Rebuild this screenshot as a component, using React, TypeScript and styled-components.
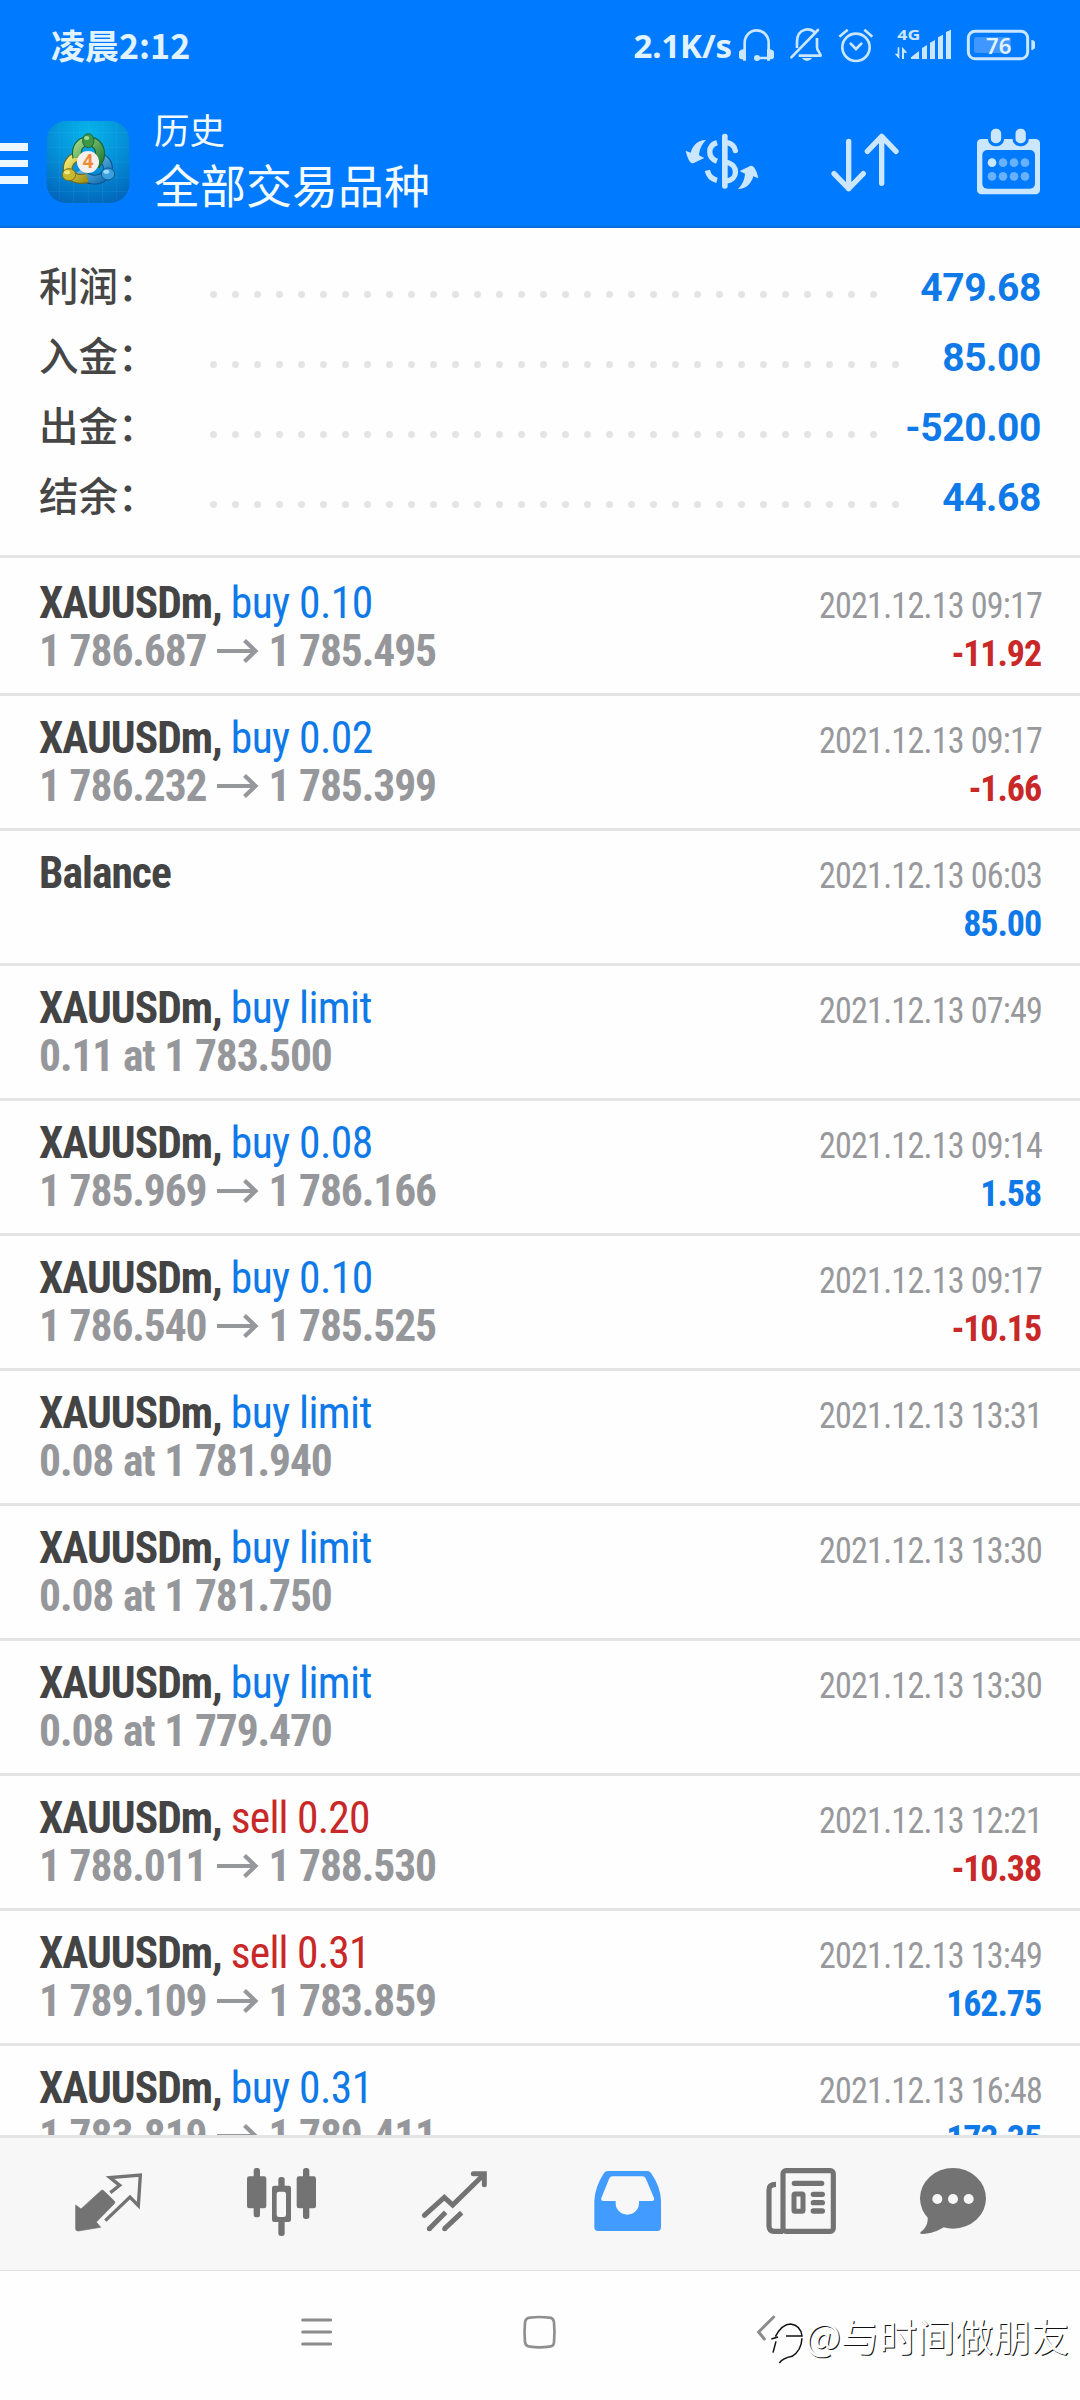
import React from "react";
import styled, { createGlobalStyle } from "styled-components";

const BLUE = "#007aff";
const VALUE_BLUE = "#0f79e8";
const RED = "#c82828";
const ICE = "#cbe6ff";
const TAB = "#737373";
const LINE = "#e4e4e4";

const Global = createGlobalStyle`
  * { box-sizing: border-box; }
  body { margin: 0; background: #fefefe; }
`;

const Screen = styled.div`
  position: relative;
  width: 1080px;
  height: 2400px;
  display: flex;
  flex-direction: column;
  overflow: hidden;
  background: #fefefe;
  font-family: Roboto, "Noto Sans CJK SC", sans-serif;
`;

const Header = styled.header`
  height: 228px;
  flex: none;
  background: ${BLUE};
  border-bottom: 2px solid #0c6cdb;
`;

const StatusBar = styled.div`
  height: 120px;
  padding: 28px 44px 0 51px;
  display: flex;
  align-items: flex-start;
  color: #e0f3ff;
`;

const Clock = styled.span`
  font: 700 34px/34px "Noto Sans CJK SC", sans-serif;
`;

const StatusRight = styled.div`
  margin-left: auto;
  display: flex;
  gap: 14px;
  height: 35px;
`;

const Speed = styled.span`
  font: 700 33px/35px "Noto Sans", sans-serif;
  letter-spacing: -0.1px;
  margin-right: -7px;
`;

const TitleBar = styled.div`
  display: flex;
  height: 84px;
  padding-right: 38px;
`;

const Burger = styled.div`
  width: 28px;
  margin-right: 18px;
  padding-top: 23px;
  display: flex;
  flex-direction: column;
  gap: 9px;
`;

const BurgerLine = styled.i`
  height: 7.7px;
  background: #ecf8ff;
`;

const Titles = styled.div`
  margin-left: 24px;
  margin-top: -10px;
  flex: 1;
  color: #f3fbff;
  font-family: "Noto Sans CJK SC", sans-serif;
  font-weight: 400;
`;

const Section = styled.div`
  font-size: 35.5px;
  line-height: 38px;
`;

const Symbols = styled.div`
  font-size: 46px;
  line-height: 71px;
`;

const Actions = styled.div`
  display: flex;
  padding-top: 7px;
  & > svg:nth-child(2) { margin: 0 75px 0 70px; }
`;

const Summary = styled.section`
  height: 330px;
  flex: none;
  padding: 23px 39px 0;
  border-bottom: 3px solid ${LINE};
`;

const SummaryRow = styled.div`
  height: 70px;
  display: flex;
  align-items: center;
`;

const Label = styled.span`
  width: 171px;
  font: 500 39.5px/70px "Noto Sans CJK SC", sans-serif;
  color: #464646;
  margin-top: -5px;
`;

const Dots = styled.span`
  flex: 1;
  display: flex;
  gap: 15px;
  padding-top: 17px;
`;

const Dot = styled.i`
  width: 7px;
  height: 7px;
  border-radius: 50%;
  background: #e4e4e4;
`;

const Total = styled.span`
  font: 700 39px/70px Roboto, sans-serif;
  letter-spacing: -0.4px;
  padding-top: 3px;
  color: ${VALUE_BLUE};
`;

const List = styled.section`
  flex: 1;
  min-height: 0;
  overflow: hidden;
  padding-top: 3px;
`;

const Row = styled.article`
  height: 135px;
  padding: 19px 38px 0 39px;
  display: flex;
  justify-content: space-between;
  border-bottom: 3px solid ${LINE};
  font-family: "Roboto Condensed", Roboto, sans-serif;
  font-stretch: 75%;
  white-space: nowrap;
`;

const Left = styled.div`
  font-size: 43.5px;
  line-height: 48px;
`;

const Right = styled.div`
  text-align: right;
  font-size: 36px;
  line-height: 48px;
  padding-top: 2px;
`;

const Name = styled.div`
  height: 48px;
  color: #444;
  font-weight: 700;
  letter-spacing: -0.98px;
`;

const Side = styled.span<{ $sell?: boolean }>`
  font-weight: 400;
  letter-spacing: ${(p) => (p.$sell ? -0.8 : -0.58)}px;
  color: ${(p) => (p.$sell ? RED : VALUE_BLUE)};
`;

const Detail = styled.div`
  color: #96979b;
  font-weight: 700;
  height: 48px;
  letter-spacing: -1.1px;
  word-spacing: 0.8px;
`;

const Arrow = styled.svg`
  width: 42px;
  height: 24px;
  margin: 0 9px 3px 11px;
`;

const Time = styled.div`
  color: #98999c;
  letter-spacing: -0.8px;
  transform: scaleX(0.945);
  transform-origin: right;
`;

const Profit = styled.div<{ $neg: boolean }>`
  font-weight: 700;
  letter-spacing: -1.1px;
  padding-right: 1px;
  color: ${(p) => (p.$neg ? RED : VALUE_BLUE)};
`;

const TabBar = styled.nav`
  height: 136px;
  flex: none;
  padding-left: 22px;
  display: flex;
  background: #f7f7f7;
  border-top: 3px solid ${LINE};
  border-bottom: 1px solid #e2e2e2;
`;

const Tab = styled.div<{ $w?: number }>`
  width: ${(p) => p.$w ?? 173}px;
  padding-top: 28px;
  display: flex;
  justify-content: center;
`;

const NavBar = styled.div`
  height: 129px;
  flex: none;
  padding: 42px 0 0 301px;
  display: flex;
  gap: 189px;
  & > svg:last-child { margin-left: 10px; }
`;

const Watermark = styled.div`
  position: absolute;
  left: 770px;
  top: 2309px;
  display: flex;
  color: #fff;
  font: 400 38px/52px "Noto Sans CJK SC", sans-serif;
  text-shadow: 1px 1px 0.5px #111;
`;

type IconProps = { box: [number, number, number, number]; children: React.ReactNode };

const Glyph = styled.svg`
  flex: none;
  overflow: visible;
`;

/* Icon paths are drawn on a grid three times finer than the screen. */
const Icon = ({ box, children }: IconProps) => (
  <Glyph width={box[2] / 3} height={box[3] / 3} viewBox={box.join(" ")} fill="none">
    {children}
  </Glyph>
);

const StatusIcons = () => (
  <>
    <Icon box={[357, 24, 108, 105]}>
      <path d="M374 118V68a36 37 0 0 1 72 0v46H412" stroke={ICE} strokeWidth="8" />
      <path d="M378 88v34h-9v-4q-12 0-12-8v-12q0-8 12-10zM441 88v34h9v-4q12 0 12-8v-12q0-8-12-10z" fill={ICE} />
      <circle cx="411" cy="114" r="9" fill={ICE} />
    </Icon>
    <Icon box={[507, 24, 102, 105]}>
      <path d="M531 84V66c0-46 46-43 53-28M591 54v27c0 14 10 15 11 26H536" stroke={ICE} strokeWidth="8" strokeLinejoin="round" />
      <path d="M514 112L594 30" stroke={ICE} strokeWidth="8" strokeLinecap="round" />
      <path d="M545 114h32q-16 18-32 0z" fill={ICE} />
    </Icon>
    <Icon box={[651, 24, 111, 105]}>
      <circle cx="708" cy="82" r="41" stroke={ICE} strokeWidth="8" />
      <path d="M692 71l16 16 16-16" stroke={ICE} strokeWidth="8" strokeLinecap="round" />
      <path d="M658 50l25-21M733 29l24 21" stroke={ICE} strokeWidth="8" />
    </Icon>
    <Icon box={[804, 24, 192, 105]}>
      <text x="832" y="59" fontFamily="Noto Sans" fontWeight="700" fontSize="45" textLength="69" lengthAdjust="spacingAndGlyphs" fill={ICE}>4G</text>
      <path d="M873 117v-5l24-19v24zM906 117V84l15-9v42zM930 117V68l15-8v57zM954 117V52l15-8v73zM978 117V36l15-7v88z" fill={ICE} />
      <path d="M838 82v35l-14-16h9V82zM846 117V80l16 18h-10v19z" fill={ICE} />
    </Icon>
    <Icon box={[1038, 24, 210, 105]}>
      <rect x="1045" y="34" width="178" height="82" rx="20" stroke={ICE} strokeWidth="9" />
      <rect x="1062" y="51" width="110" height="48" rx="8" fill="#4097ff" />
      <path d="M1234 60q11 1 11 8v14q0 7-11 8z" fill={ICE} />
      <text x="1098" y="101" fontFamily="Noto Sans" fontWeight="600" fontSize="67" textLength="76" lengthAdjust="spacingAndGlyphs" fill="#e0f3ff">76</text>
    </Icon>
  </>
);

const Logo = () => (
  <Icon box={[138, 300, 252, 252]}>
    <defs>
      <radialGradient id="bg" cx="0.5" cy="0.15" r="0.9">
        <stop offset="0" stopColor="#06b5ea" />
        <stop offset="0.5" stopColor="#0590d8" />
        <stop offset="1" stopColor="#0265ba" />
      </radialGradient>
      <linearGradient id="gr" x2="1" y2="1"><stop stopColor="#9fd684" /><stop offset="1" stopColor="#207a34" /></linearGradient>
      <linearGradient id="ye" x2="1" y2="1"><stop stopColor="#f4ec78" /><stop offset="1" stopColor="#a29216" /></linearGradient>
      <linearGradient id="bl" x2="1" y2="1"><stop stopColor="#7fd0f8" /><stop offset="1" stopColor="#136db0" /></linearGradient>
    </defs>
    <rect x="140" y="303" width="248" height="246" rx="58" fill="url(#bg)" />
    <path d="M178 310v232M221 303v246M265 303v246M308 303v246M350 310v232M140 338h248M140 382h248M140 426h248M140 472h248M140 514h248" stroke="#5fd0f5" strokeOpacity="0.16" strokeWidth="2" />
    <g strokeWidth="30">
      <path d="M238 452c22 34 62 34 80 10c12-18 4-38-12-46" stroke="#0b568f" />
      <path d="M238 452c22 34 62 34 80 10c12-18 4-38-12-46" stroke="url(#bl)" strokeWidth="23" />
      <path d="M262 474c-26 8-52-2-58-22c-4-20 10-40 32-42" stroke="#6d6a20" />
      <path d="M262 474c-26 8-52-2-58-22c-4-20 10-40 32-42" stroke="url(#ye)" strokeWidth="23" />
      <path d="M232 412C226 385 240 364 265 364s40 22 34 50l-14 24" stroke="#17663a" />
      <path d="M232 412C226 385 240 364 265 364s40 22 34 50l-14 24" stroke="url(#gr)" strokeWidth="23" />
    </g>
    <ellipse cx="265" cy="362" rx="17" ry="21" fill="#3d9845" stroke="#1b653b" strokeWidth="3" />
    <ellipse cx="207" cy="464" rx="20" ry="18" fill="#c9b92c" stroke="#77701e" strokeWidth="3" />
    <ellipse cx="324" cy="462" rx="20" ry="18" fill="#3d9ede" stroke="#0b568f" strokeWidth="3" />
    <ellipse cx="260" cy="354" rx="8" ry="6" fill="#a5dc9b" />
    <ellipse cx="201" cy="457" rx="9" ry="6" fill="#f1e882" />
    <ellipse cx="319" cy="455" rx="9" ry="6" fill="#9bdaf8" />
    <circle cx="264" cy="426" r="33" fill="#f3efec" />
    <text x="264" y="445" textAnchor="middle" fontFamily="Noto Sans" fontWeight="700" fontSize="56" fill="#f08a35">4</text>
  </Icon>
);

const swoosh = "M258 357C236 356 218 372 212 395L197 389Q202 412 210 422Q216 430 226 424L253 411L237 403C238 386 246 368 258 357Z";

const HeaderIcons = () => (
  <Actions>
    <Icon box={[192, 318, 228, 210]}>
      <path d={swoosh} fill={ICE} />
      <path d={swoosh} fill={ICE} transform="rotate(180 306 430.5)" />
      <rect x="306" y="338" width="17" height="165" rx="8" fill={ICE} />
      <path d="M291 365C262 374 262 410 291 421M262 448q5 24 29 30M318 424c38 6 38 52 0 56" stroke={ICE} strokeWidth="16" />
      <path d="M318 364q25 4 28 25" stroke={ICE} strokeWidth="16" strokeLinecap="round" />
    </Icon>
    <Icon box={[630, 318, 210, 210]}>
      <path d="M686 361V503M642 458l44 45 44-45M785 487V346M742 391l43-45 43 45" stroke={ICE} strokeWidth="16" strokeLinecap="round" strokeLinejoin="round" />
    </Icon>
    <Icon box={[1065, 318, 201, 210]}>
      <rect x="1071" y="354" width="189" height="166" rx="13" fill={ICE} />
      <rect x="1087" y="387" width="158" height="116" rx="15" fill={BLUE} />
      {[1128, 1202].map((x) => (
        <rect key={x} x={x - 20} y="319" width="40" height="52" rx="18" fill={ICE} stroke={BLUE} strokeWidth="9" />
      ))}
      {[425, 466].flatMap((y, r) =>
        [1116, 1149, 1182, 1215].map((x, c) => (
          <circle key={`${x}-${y}`} cx={x} cy={y} r="13" fill={r + c === 0 ? ICE : "#67b1ff"} />
        ))
      )}
    </Icon>
  </Actions>
);

const Tabs = () => (
  <TabBar>
    <Tab>
      <Icon box={[42, 138, 207, 216]}>
        <path d="M47 255L63 267 123 212q4-4 8 0L163 243q3 4 0 8L109 306l13 16L55 333q-8 0-8-7z" fill={TAB} stroke={TAB} strokeWidth="2" />
        <path d="M151 218l28-22-29-23 91-8-6 92-25-26-74 71" stroke={TAB} strokeWidth="10" />
      </Icon>
    </Tab>
    <Tab>
      <Icon box={[557, 138, 216, 216]}>
        <g fill={TAB}>
          <rect x="560" y="169" width="58" height="96" rx="7" />
          <rect x="580" y="144" width="19" height="148" rx="8" />
          <rect x="709" y="169" width="58" height="96" rx="7" />
          <rect x="728" y="144" width="19" height="153" rx="8" />
          <rect x="635" y="197" width="57" height="109" rx="7" />
          <rect x="654" y="171" width="19" height="177" rx="8" />
        </g>
        <rect x="649" y="215" width="28" height="76" rx="7" fill="#f7f7f7" />
      </Icon>
    </Tab>
    <Tab>
      <Icon box={[1082, 138, 204, 216]}>
        <path d="M1092 286l60-54 25 23 93-91M1239 161h33v33" stroke={TAB} strokeWidth="15" strokeLinecap="round" />
        <circle cx="1107" cy="326" r="7.5" fill={TAB} />
        <circle cx="1153" cy="326" r="7.5" fill={TAB} />
        <path d="M1107 326l49-49M1153 326l51-48" stroke={TAB} strokeWidth="15" />
      </Icon>
    </Tab>
    <Tab>
      <Icon box={[39, 138, 207, 216]}>
        <path fillRule="evenodd" fill="#429cff" d="M84 153H202Q209 153 213 159Q242 200 243 243V322Q243 333 232 333H54Q43 333 43 322V243Q45 200 72 159Q76 153 84 153ZM98 169Q91 169 88 175L64 234Q62 243 70 243H107V250A35 34 0 0 0 177 250V243H216Q224 243 222 234L197 175Q194 169 187 169Z" />
      </Icon>
    </Tab>
    <Tab>
      <Icon box={[555, 138, 216, 216]}>
        <g stroke={TAB} strokeWidth="15.5">
          <rect x="609" y="152" width="151" height="182" rx="9" />
          <path d="M588 193q-21 0-21 16V318q0 16 16 16h26" />
        </g>
        <path d="M643 190h82M700 223h27M700 248h27M700 273h27" stroke={TAB} strokeWidth="16" strokeLinecap="round" />
        <rect x="642" y="222" width="27" height="52" rx="3" stroke={TAB} strokeWidth="15" />
      </Icon>
    </Tab>
    <Tab $w={132}>
      <Icon box={[1017, 138, 204, 216]}>
        <ellipse cx="1119" cy="235" rx="99" ry="91" fill={TAB} />
        <path d="M1043 288C1045 312 1036 326 1022 336Q1018 341 1026 342C1055 340 1072 334 1092 321z" fill={TAB} />
        {[1072, 1119, 1166].map((x) => (
          <circle key={x} cx={x} cy="237" r="15" fill="#f7f7f7" />
        ))}
      </Icon>
    </Tab>
  </TabBar>
);

const totals: [string, string, number][] = [
  ["利润", "479.68", 31],
  ["入金", "85.00", 32],
  ["出金", "-520.00", 31],
  ["结余", "44.68", 32],
];

type Deal = { side?: string; from: string; to?: string; time: string; profit?: string };

const deals: Deal[] = [
  { side: "buy 0.10", from: "1 786.687", to: "1 785.495", time: "09:17", profit: "-11.92" },
  { side: "buy 0.02", from: "1 786.232", to: "1 785.399", time: "09:17", profit: "-1.66" },
  { from: "", time: "06:03", profit: "85.00" },
  { side: "buy limit", from: "0.11 at 1 783.500", time: "07:49" },
  { side: "buy 0.08", from: "1 785.969", to: "1 786.166", time: "09:14", profit: "1.58" },
  { side: "buy 0.10", from: "1 786.540", to: "1 785.525", time: "09:17", profit: "-10.15" },
  { side: "buy limit", from: "0.08 at 1 781.940", time: "13:31" },
  { side: "buy limit", from: "0.08 at 1 781.750", time: "13:30" },
  { side: "buy limit", from: "0.08 at 1 779.470", time: "13:30" },
  { side: "sell 0.20", from: "1 788.011", to: "1 788.530", time: "12:21", profit: "-10.38" },
  { side: "sell 0.31", from: "1 789.109", to: "1 783.859", time: "13:49", profit: "162.75" },
  { side: "buy 0.31", from: "1 783.819", to: "1 789.411", time: "16:48", profit: "173.35" },
];

const DealRow = ({ deal }: { deal: Deal }) => (
  <Row>
    <Left>
      <Name>
        {deal.side ? "XAUUSDm, " : "Balance"}
        {deal.side && <Side $sell={deal.side.startsWith("sell")}>{deal.side}</Side>}
      </Name>
      <Detail>
        {deal.from}
        {deal.to && (
          <>
            <Arrow viewBox="0 0 42 24" fill="none" stroke="#96979b" strokeWidth="4.2">
              <path d="M0 12H39M27.500 1.500L38.500 12L27.500 22.500" />
            </Arrow>
            {deal.to}
          </>
        )}
      </Detail>
    </Left>
    <Right>
      <Time>2021.12.13 {deal.time}</Time>
      {deal.profit && <Profit $neg={deal.profit.startsWith("-")}>{deal.profit}</Profit>}
    </Right>
  </Row>
);

export default function App() {
  return (
    <Screen>
      <Global />
      <Header>
        <StatusBar>
          <Clock>凌晨2:12</Clock>
          <StatusRight>
            <Speed>2.1K/s</Speed>
            <StatusIcons />
          </StatusRight>
        </StatusBar>
        <TitleBar>
          <Burger>
            <BurgerLine />
            <BurgerLine />
            <BurgerLine />
          </Burger>
          <Logo />
          <Titles>
            <Section>历史</Section>
            <Symbols>全部交易品种</Symbols>
          </Titles>
          <HeaderIcons />
        </TitleBar>
      </Header>
      <Summary>
        {totals.map(([label, value, dots]) => (
          <SummaryRow key={label}>
            <Label>{label}：</Label>
            <Dots>
              {Array.from({ length: dots }, (_, i) => (
                <Dot key={i} />
              ))}
            </Dots>
            <Total>{value}</Total>
          </SummaryRow>
        ))}
      </Summary>
      <List>
        {deals.map((deal, i) => (
          <DealRow key={i} deal={deal} />
        ))}
      </List>
      <Tabs />
      <NavBar>
        <Icon box={[0, 0, 96, 114]}>
          <path d="M5 21H89M5 57H89M5 93H89" stroke="#8c8c8c" strokeWidth="9" strokeLinecap="round" />
        </Icon>
        <Icon box={[0, 0, 102, 114]}>
          <path d="M24 14Q51 10 82 14Q94 14 96 28Q99 58 96 88Q95 100 82 101Q51 105 24 101Q11 100 9 88Q6 58 9 28Q11 15 24 14Z" stroke="#8f8f8f" strokeWidth="8" />
        </Icon>
        <Icon box={[0, 0, 84, 114]}>
          <path d="M56 12L11 57L28 78" stroke="#8c8c8c" strokeWidth="9" strokeLinecap="round" />
        </Icon>
      </NavBar>
      <Watermark>
        <Icon box={[572, 567, 105, 165]}>
          <path d="M588 650q20-38 46-38q30 4 34 36h-48M576 657l20-6M590 664l-9 34M668 655q-2 38-30 54q-28 6-38 20" stroke="#111" strokeWidth="4.5" />
        </Icon>
        @与时间做朋友
      </Watermark>
    </Screen>
  );
}
